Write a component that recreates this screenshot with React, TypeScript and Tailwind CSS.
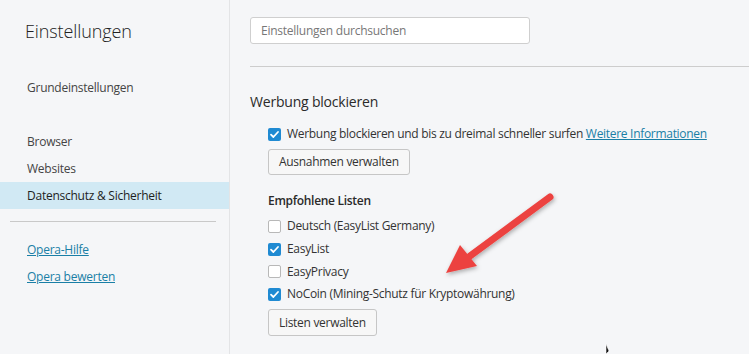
import React from "react";

const font = { fontFamily: '"Open Sans", "Noto Sans", sans-serif' };

function Check({ checked }: { checked: boolean }) {
  if (checked) {
    return (
      <span className="inline-flex w-[13px] h-[13px] rounded-[2px] bg-[#1f8ad2] items-center justify-center shrink-0">
        <svg width="11" height="11" viewBox="0 0 11 11">
          <path d="M2 5.6 L4.4 8 L9 3" stroke="white" strokeWidth="1.8" fill="none" strokeLinecap="round" strokeLinejoin="round" />
        </svg>
      </span>
    );
  }
  return <span className="inline-block w-[13px] h-[13px] rounded-[2px] border border-[#b8b8b8] bg-white shrink-0" />;
}

function NavItem({ label, active }: { label: string; active?: boolean }) {
  return (
    <div className={`h-[27px] flex items-center pl-[27px] text-[12px] tracking-[-0.25px] ${active ? "bg-[#d1e9f4] text-[#1e1e1e] font-medium" : "text-[#444]"}`}>
      {label}
    </div>
  );
}

function ListRow({ label, checked }: { label: string; checked: boolean }) {
  return (
    <div className="h-[22.7px] flex items-center gap-[6px] text-[12px] tracking-[-0.3px] text-[#333]">
      <Check checked={checked} />
      <span>{label}</span>
    </div>
  );
}

export default function App() {
  return (
    <div className="w-[749px] h-[354px] bg-[#f5f6f8] flex overflow-hidden relative" style={font}>
      <aside className="w-[230px] h-full border-r border-[#e3e4e6] flex flex-col shrink-0">
        <div className="h-[62px] flex items-center pl-[25px] text-[18px] font-light text-[#222] tracking-[-0.1px]">Einstellungen</div>
        <div className="h-[27px] mt-[12px] flex items-center pl-[27px] text-[12px] tracking-[-0.25px] text-[#444]">Grundeinstellungen</div>
        <div className="mt-[27px]">
          <NavItem label="Browser" />
          <NavItem label="Websites" />
          <NavItem label="Datenschutz & Sicherheit" active />
        </div>
        <div className="mx-[10px] mr-[13px] mt-[12px] border-t border-[#c9c9c9]" />
        <div className="mt-[14px] flex flex-col">
          <a className="h-[27px] flex items-center pl-[27px] text-[12px] tracking-[-0.25px] text-[#1a7fa6] underline">Opera-Hilfe</a>
          <a className="h-[27px] flex items-center pl-[27px] text-[12px] tracking-[-0.25px] text-[#1a7fa6] underline">Opera bewerten</a>
        </div>
      </aside>
      <main className="flex-1 pl-[20px] flex flex-col">
        <div className="pt-[17px]">
          <div className="w-[280px] h-[27px] bg-white border border-[#cfcfcf] rounded-[3px] flex items-center pl-[10px] text-[12px] tracking-[-0.25px] text-[#777]">
            Einstellungen durchsuchen
          </div>
        </div>
        <div className="mt-[22px] border-t border-[#cdcdcd]" />
        <div className="mt-[24px] text-[14px] font-medium text-[#2a2a2a] h-[20px] flex items-center tracking-[-0.2px]">Werbung blockieren</div>
        <div className="pl-[18px] flex flex-col">
          <div className="mt-[16px] h-[14px] flex items-center gap-[6px] text-[12px] tracking-[-0.3px] text-[#333]">
            <Check checked />
            <span>
              Werbung blockieren und bis zu dreimal schneller surfen{" "}
              <a className="text-[#1a7fa6] underline">Weitere Informationen</a>
            </span>
          </div>
          <div className="mt-[7px]">
            <button className="h-[26px] px-[10px] bg-[#f7f7f7] border border-[#c6c6c6] rounded-[3px] text-[12px] tracking-[-0.3px] text-[#333]">
              Ausnahmen verwalten
            </button>
          </div>
          <div className="mt-[18px] text-[12px] font-semibold text-[#2a2a2a] h-[16px] flex items-center tracking-[-0.3px]">Empfohlene Listen</div>
          <div className="mt-[6px] flex flex-col">
            <ListRow label="Deutsch (EasyList Germany)" checked={false} />
            <ListRow label="EasyList" checked />
            <ListRow label="EasyPrivacy" checked={false} />
            <ListRow label="NoCoin (Mining-Schutz für Kryptowährung)" checked />
          </div>
          <div className="mt-[3px]">
            <button className="h-[27px] px-[10px] bg-[#f7f7f7] border border-[#c6c6c6] rounded-[3px] text-[12px] tracking-[-0.3px] text-[#333]">
              Listen verwalten
            </button>
          </div>
        </div>
      </main>
      <svg className="absolute left-0 top-0 pointer-events-none" width="749" height="354" viewBox="0 0 749 354">
        <defs>
          <filter id="sh" x="-20%" y="-20%" width="140%" height="140%">
            <feDropShadow dx="1" dy="2" stdDeviation="2" floodColor="#000" floodOpacity="0.3" />
          </filter>
        </defs>
        <g filter="url(#sh)">
          <line x1="550" y1="197" x2="470" y2="256" stroke="#ec4340" strokeWidth="7" strokeLinecap="round" />
          <polygon points="446,273 460,245 477,266" fill="#ec4340" />
        </g>
        <path d="M606 344 L606 354 L609 351 Z" fill="#111" stroke="#fff" strokeWidth="0.6" />
      </svg>
    </div>
  );
}
